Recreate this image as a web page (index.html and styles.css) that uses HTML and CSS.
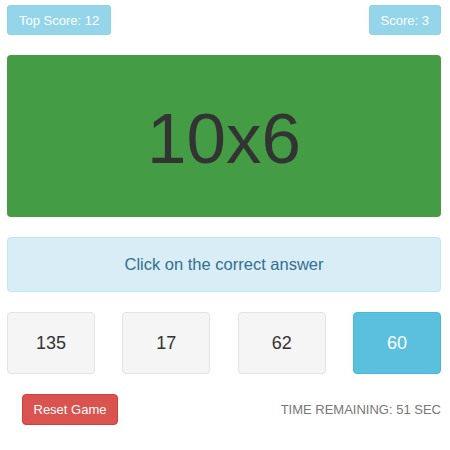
FILE: index.html
```html
<!DOCTYPE html>
<html>
<head>
<meta charset="utf-8">
<link rel="stylesheet" href="styles.css">
</head>
<body>
<div class="game">
  <div class="scores">
    <span class="score-btn">Top Score: 12</span>
    <span class="score-btn">Score: 3</span>
  </div>
  <div class="question">10x6</div>
  <div class="prompt">Click on the correct answer</div>
  <div class="answers">
    <div class="answer">135</div>
    <div class="answer">17</div>
    <div class="answer">62</div>
    <div class="answer active">60</div>
  </div>
  <div class="footer">
    <button class="reset">Reset Game</button>
    <span class="timer">TIME REMAINING: 51 SEC</span>
  </div>
</div>
</body>
</html>
```

FILE: styles.css
```css
body {
  margin: 0;
  background: #fff;
  font-family: "Liberation Sans", Arial, sans-serif;
  color: #333;
}
.game {
  width: 434px;
  margin: 0 0 0 7px;
  padding-top: 5px;
  display: flex;
  flex-direction: column;
  gap: 20px;
}
.scores {
  display: flex;
  justify-content: space-between;
}
.score-btn {
  height: 30px;
  box-sizing: border-box;
  padding: 0 11px;
  display: flex;
  align-items: center;
  background: #94d5ea;
  border: 1px solid #8ed2e8;
  border-radius: 3px;
  color: #fff;
  font-size: 13px;
}
.question {
  height: 162px;
  padding-top: 4px;
  box-sizing: border-box;
  background: #449d44;
  border-radius: 4px;
  display: flex;
  align-items: center;
  justify-content: center;
  font-size: 71px;
  color: #333;
}
.prompt {
  height: 55px;
  box-sizing: border-box;
  background: #d9edf7;
  border: 1px solid #bce8f1;
  border-radius: 4px;
  display: flex;
  align-items: center;
  justify-content: center;
  color: #31708f;
  font-size: 16.5px;
}
.answers {
  display: flex;
  justify-content: space-between;
}
.answer {
  width: 88px;
  height: 62px;
  box-sizing: border-box;
  background: #f5f5f5;
  border: 1px solid #e3e3e3;
  border-radius: 4px;
  display: flex;
  align-items: center;
  justify-content: center;
  font-size: 18px;
  color: #333;
}
.answer.active {
  background: #5bc0de;
  border-color: #46b8da;
  color: #fff;
}
.footer {
  display: flex;
  justify-content: space-between;
  align-items: center;
  padding-left: 15px;
}
.reset {
  width: 96px;
  height: 31px;
  background: #d9534f;
  border: 1px solid #d43f3a;
  border-radius: 4px;
  color: #fff;
  font-family: "Liberation Sans", Arial, sans-serif;
  font-size: 13px;
  padding: 0;
}
.timer {
  color: #777;
  font-size: 13px;
}
```
